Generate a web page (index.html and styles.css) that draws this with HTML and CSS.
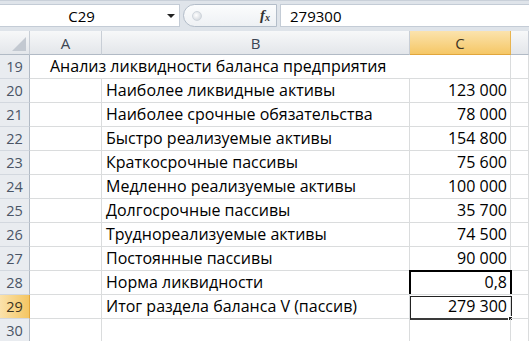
FILE: index.html
```html
<!DOCTYPE html>
<html lang="ru">
<head>
  <meta charset="UTF-8">
  <title>Анализ ликвидности</title>
  <link rel="stylesheet" href="styles.css">
</head>
<body>
  <div class="formula-bar">
    <div class="name-box">
      <span class="name">C29</span>
      <span class="drop"></span>
    </div>
    <div class="fx-pill">
      <span class="dot"></span>
      <span class="fx">f<sub>x</sub></span>
    </div>
    <div class="formula">279300</div>
  </div>

  <div class="sheet">
    <div class="hd corner"><span class="tri"></span></div>
    <div class="hd">A</div>
    <div class="hd">B</div>
    <div class="hd sel">C</div>
    <div class="hd"></div>

    <div class="rh">19</div>
    <div class="c title">Анализ ликвидности баланса предприятия</div>
    <div class="c"></div>

    <div class="rh">20</div>
    <div class="c"></div>
    <div class="c">Наиболее ликвидные активы</div>
    <div class="c num">123 000</div>
    <div class="c"></div>

    <div class="rh">21</div>
    <div class="c"></div>
    <div class="c">Наиболее срочные обязательства</div>
    <div class="c num">78 000</div>
    <div class="c"></div>

    <div class="rh">22</div>
    <div class="c"></div>
    <div class="c">Быстро реализуемые активы</div>
    <div class="c num">154 800</div>
    <div class="c"></div>

    <div class="rh">23</div>
    <div class="c"></div>
    <div class="c">Краткосрочные пассивы</div>
    <div class="c num">75 600</div>
    <div class="c"></div>

    <div class="rh">24</div>
    <div class="c"></div>
    <div class="c">Медленно реализуемые активы</div>
    <div class="c num">100 000</div>
    <div class="c"></div>

    <div class="rh">25</div>
    <div class="c"></div>
    <div class="c">Долгосрочные пассивы</div>
    <div class="c num">35 700</div>
    <div class="c"></div>

    <div class="rh">26</div>
    <div class="c"></div>
    <div class="c">Труднореализуемые активы</div>
    <div class="c num">74 500</div>
    <div class="c"></div>

    <div class="rh">27</div>
    <div class="c"></div>
    <div class="c">Постоянные пассивы</div>
    <div class="c num">90 000</div>
    <div class="c"></div>

    <div class="rh">28</div>
    <div class="c"></div>
    <div class="c">Норма ликвидности</div>
    <div class="c num boxed">0,8</div>
    <div class="c"></div>

    <div class="rh sel">29</div>
    <div class="c"></div>
    <div class="c">Итог раздела баланса V (пассив)</div>
    <div class="c num active">279 300<span class="handle"></span></div>
    <div class="c"></div>

    <div class="rh">30</div>
    <div class="c"></div>
    <div class="c"></div>
    <div class="c"></div>
    <div class="c"></div>
  </div>
</body>
</html>
```

FILE: styles.css
```css
* { margin: 0; padding: 0; box-sizing: border-box; }

body {
  width: 529px; height: 341px; overflow: hidden;
  background: #fff; font-family: 'Open Sans', 'Noto Sans', sans-serif;
  color: #000;
}

/* formula bar */
.formula-bar {
  height: 31px; background: #dfe4ea; padding: 3px 0 4px;
  display: flex; border-top: 1px solid #c9d0d9;
}
.name-box {
  width: 180px; background: #fff; display: flex; align-items: center;
  border: 1px solid #c4ccd6; border-left: none; position: relative;
}
.name { flex: 1; text-align: center; font-size: 15px; padding-right: 4px; }
.drop {
  width: 0; height: 0; margin-right: 4px;
  border-left: 4px solid transparent; border-right: 4px solid transparent;
  border-top: 4px solid #222;
}
.fx-pill {
  width: 94px; margin-left: 3px; display: flex; align-items: center;
  justify-content: space-between; padding: 0 6px 0 8px;
  background: linear-gradient(#fbfcfd, #eef1f4);
  border: 1px solid #b3bdc9; border-radius: 12px 0 0 12px;
}
.dot {
  width: 10px; height: 10px; border-radius: 50%;
  background: radial-gradient(circle at 40% 40%, #fff, #c9cfd6);
  border: 1px solid #cfd5dc;
}
.fx {
  font-family: 'Liberation Serif', serif; font-style: italic; font-weight: 700;
  font-size: 15px; color: #333;
}
.fx sub { font-size: 10px; vertical-align: -1px; }
.formula {
  flex: 1; margin-left: 3px; background: #fff; border: 1px solid #c4ccd6;
  border-right: none; font-size: 15px; padding-left: 9px;
  display: flex; align-items: center;
}

/* sheet grid */
.sheet {
  display: grid;
  grid-template-columns: 30px 72px 308px 101px 18px;
  grid-auto-rows: 24px;
}
.hd {
  background: linear-gradient(#f7f8f9, #e3e6ea);
  border-right: 1px solid #c8ced6; border-bottom: 1px solid #b1bac5;
  display: flex; align-items: center; justify-content: center;
  font-size: 15px; color: #3b4452;
}
.hd.sel {
  background: linear-gradient(#fbe3ad, #f5c766);
  border-right: 1px solid #e8b44f; border-bottom: 1px solid #e1a63c;
  color: #3b3422;
}
.corner { position: relative; }
.tri {
  position: absolute; right: 3px; bottom: 3px; width: 0; height: 0;
  border-left: 14px solid transparent; border-bottom: 14px solid #c3c9d1;
}
.rh {
  background: #e9ecf0; border-right: 1px solid #b1bac5;
  border-bottom: 1px solid #d3d8df;
  display: flex; align-items: center; justify-content: center;
  font-size: 14.5px; color: #4a5566;
}
.rh.sel {
  background: linear-gradient(90deg, #fbe2ab, #f4c663);
  border-right: 1px solid #e1a63c; color: #3b3422;
}

.c {
  border-right: 1px solid #dadcdd; border-bottom: 1px solid #dadcdd;
  font-size: 16px; line-height: 23px; white-space: nowrap;
  padding: 0 4px; position: relative;
}
.c.title { grid-column: span 3; padding-left: 20px; }
.c.num { text-align: right; padding-right: 3px; }

.c.boxed::before {
  content: ''; position: absolute; left: -1px; top: -1px; right: -2px; bottom: 0;
  border: 2px solid #000; border-bottom: none;
}
.c.active::before {
  content: ''; position: absolute; left: 0; top: 1px; right: -2px; bottom: -2px;
  border: 1px solid #222; border-bottom: 2px solid #3a3a3a;
}
.handle {
  position: absolute; right: -3px; bottom: -3px; width: 5px; height: 5px;
  background: #222; border: 1px solid #fff;
}
```
